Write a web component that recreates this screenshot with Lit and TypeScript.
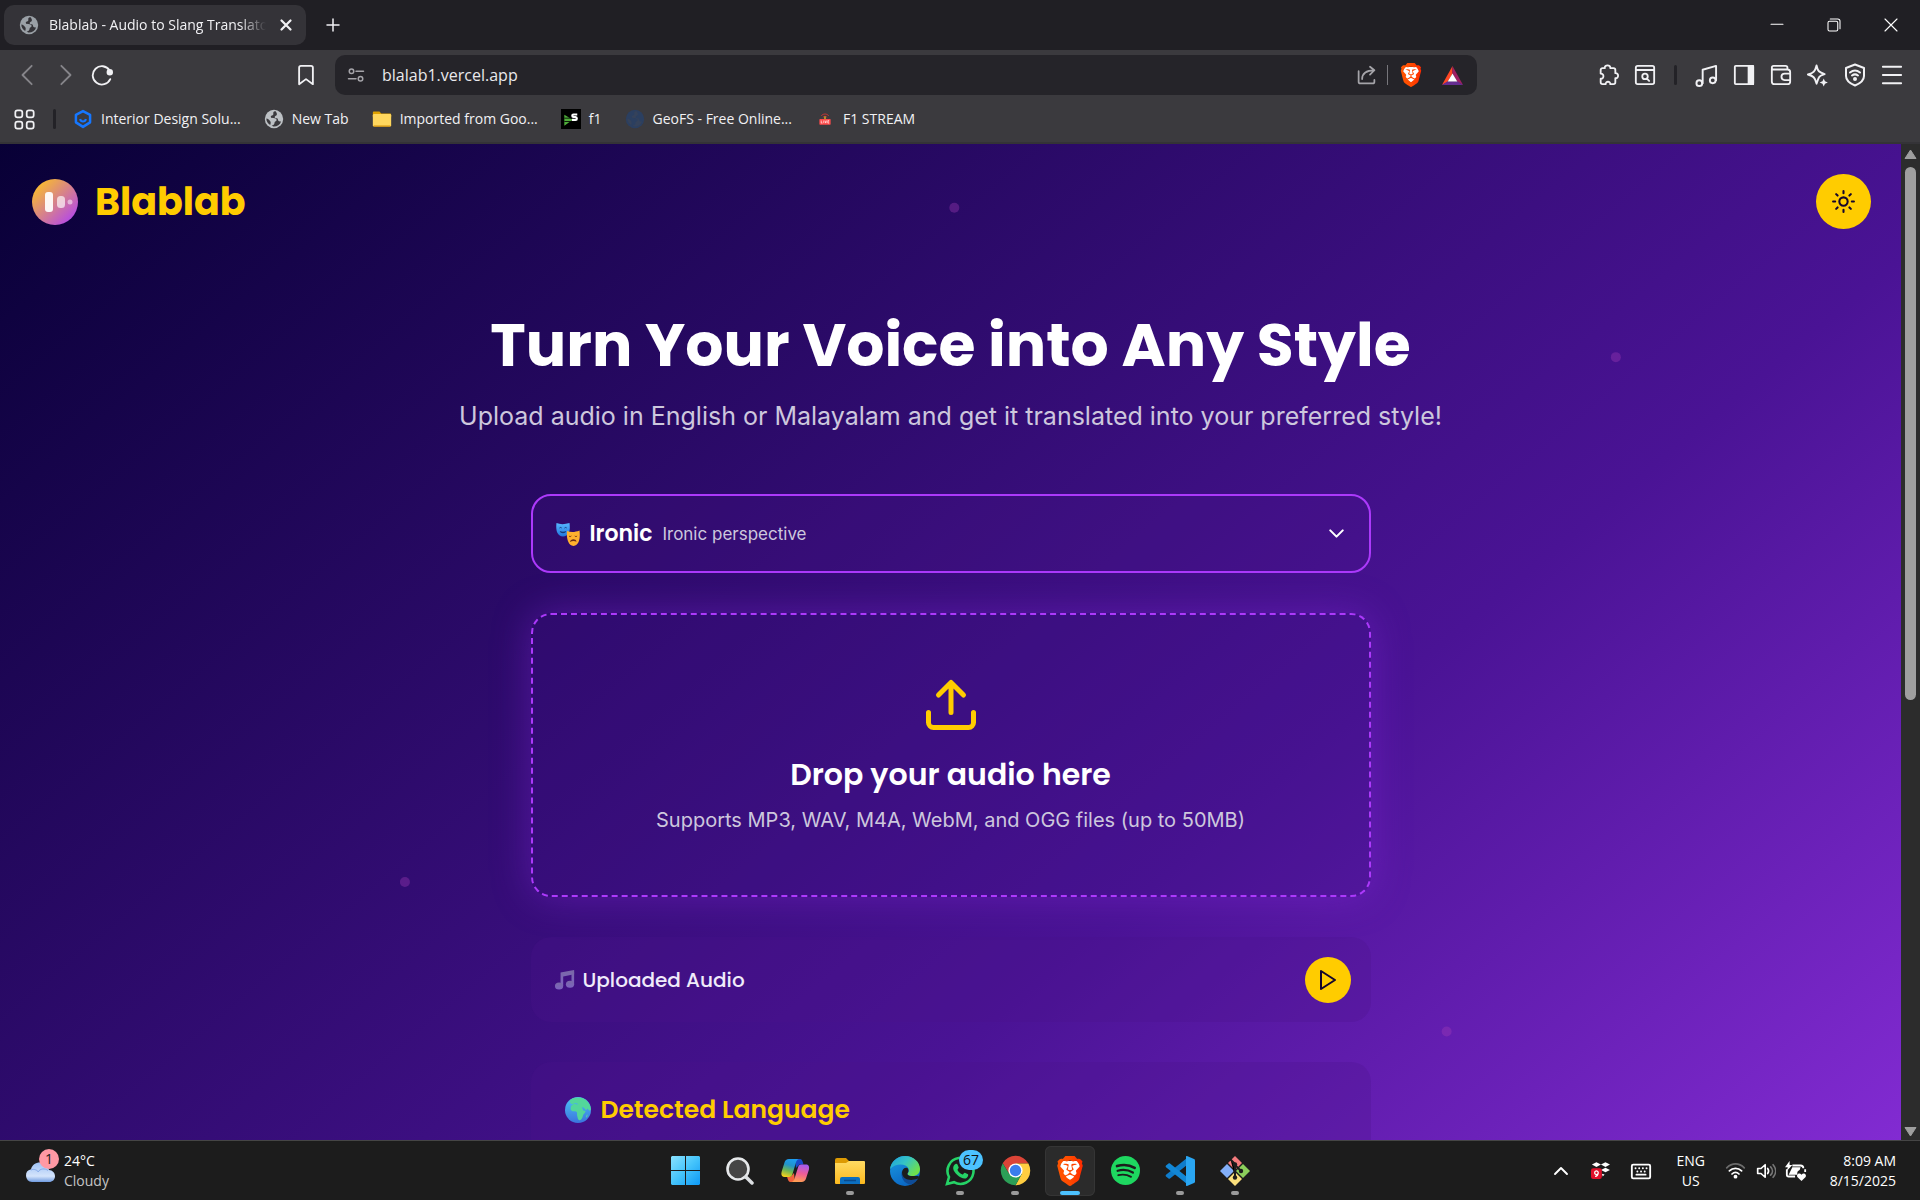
import { LitElement, html, svg, css, type TemplateResult } from "lit";
import { customElement } from "lit/decorators.js";

/* ---------- shared icon helpers ---------- */

const line = (body: TemplateResult, size = 22, width = 2) => html`
  <svg width=${size} height=${size} viewBox="0 0 24 24" fill="none" stroke="currentColor"
    stroke-width=${width} stroke-linecap="round" stroke-linejoin="round" aria-hidden="true">${body}</svg>`;

const art = (body: TemplateResult, size = 30, box = "0 0 24 24") => html`
  <svg width=${size} height=${size} viewBox=${box} aria-hidden="true">${body}</svg>`;

const shieldLion =
  "M15.68 0l2.096 2.38s1.84-.512 2.709.358c.868.87 1.584 1.638 1.584 1.638l-.562 1.381.715 2.047s-2.104 7.98-2.35 8.955c-.486 1.919-.818 2.66-2.198 3.633-1.38.972-3.884 2.66-4.293 2.916-.409.256-.92.692-1.38.692-.46 0-.97-.436-1.38-.692a185.796 185.796 0 01-4.293-2.916c-1.38-.973-1.712-1.714-2.197-3.633-.247-.975-2.351-8.955-2.351-8.955l.715-2.047-.562-1.381s.716-.768 1.585-1.638c.868-.87 2.708-.358 2.708-.358L8.321 0h7.36zm-3.679 14.936c-.14 0-1.038.317-1.758.69-.72.373-1.242.637-1.409.742-.167.104-.065.301.087.409.152.107 2.194 1.69 2.393 1.866.198.175.489.464.687.464.198 0 .49-.29.688-.464.198-.175 2.24-1.759 2.392-1.866.152-.108.254-.305.087-.41-.167-.104-.689-.368-1.41-.741-.72-.373-1.617-.69-1.757-.69zm0-11.278s-.409.001-1.022.206-1.278.46-1.584.46c-.307 0-2.581-.434-2.581-.434S4.119 7.152 4.119 7.849c0 .697.339.881.68 1.243l2.02 2.149c.192.203.59.511.356 1.066-.235.555-.58 1.26-.196 1.977.384.716 1.042 1.194 1.464 1.115.421-.08 1.412-.598 1.776-.834.364-.237 1.518-1.19 1.518-1.554 0-.365-1.193-1.02-1.413-1.168-.22-.15-1.226-.725-1.247-.95-.02-.227-.012-.293.284-.851.297-.559.831-1.304.742-1.8-.089-.495-.95-.753-1.565-.986-.615-.232-1.799-.671-1.947-.74-.148-.068-.11-.133.339-.175.448-.043 1.719-.212 2.292-.052.573.16 1.552.403 1.632.532.079.13.149.134.067.579-.081.445-.5 2.581-.541 2.96-.04.38-.12.63.288.724.409.094 1.097.256 1.333.256s.924-.162 1.333-.256c.408-.093.329-.344.288-.723-.04-.38-.46-2.516-.541-2.961-.082-.445-.012-.45.067-.579.08-.129 1.059-.372 1.632-.532.573-.16 1.845.009 2.292.052.449.042.487.107.339.175-.148.069-1.332.508-1.947.74-.615.233-1.476.49-1.565.986-.09.496.445 1.241.742 1.8.297.558.304.624.284.85-.02.226-1.026.802-1.247.95-.22.15-1.413.804-1.413 1.169 0 .364 1.154 1.317 1.518 1.554.364.236 1.355.755 1.776.834.422.079 1.08-.4 1.464-1.115.384-.716.039-1.422-.196-1.977-.235-.555.164-.863.355-1.066l2.02-2.149c.342-.362.68-.546.68-1.243 0-.697-2.695-3.96-2.695-3.96s-2.274.436-2.58.436c-.307 0-.972-.256-1.585-.461-.613-.205-1.022-.206-1.022-.206z";

const braveLogo = (size: number) => art(svg`
  <defs><linearGradient id="lion" x1="0" x2="1"><stop offset="0" stop-color="#ff5601"/><stop offset=".5" stop-color="#ff4a00"/><stop offset="1" stop-color="#ff2a00"/></linearGradient></defs>
  <path fill="#fff" d="M5 4h14l1 5-4 11-4 2-4-2L4 9z"/><path fill="url(#lion)" d=${shieldLion}/>`, size);

const globe = (fill: string, hole: string, size = 20) => art(svg`
  <circle cx="12" cy="12" r="11" fill=${fill}/>
  <path fill=${hole} d="M13.5 2.5c-2 .6-2.800 1.900-2.300 3.300.3 1-.4 1.700-1.600 1.900-1.300.2-1.800 1.200-1.200 2.300.5.9 1.800.7 3 .8 2 .2 3.700.7 3.700 2.400 0 1.500-1.700 1.400-2.200 2.500-.4.900-.1 2-1 2.900-.8.8-1.700 1.200-2.700 1.300l2 1.200c4.200.3 8-2 9.300-6.200-1.300.4-2.700.2-3.300-.8-.7-1.200-.2-2.500-1.500-3-1.100-.5-2.300.100-2.800-1-.4-1.100.9-1.600 1.900-2.200 1.300-.8.7-3.800-1.300-5.400z"/>
  <path fill=${hole} d="M2.800 11.500c2 .3 3.900 1.800 4.900 3.600.7 1.300.2 3-.3 4.200-2.800-1.700-4.700-4.500-4.600-7.800z"/>`, size);

const resets = css`
  * { box-sizing: border-box; }
  svg { display: block; flex: none; }
  button, input, select { font: inherit; color: inherit; background: none; border: 0; padding: 0; margin: 0; }
  button { display: grid; place-items: center; cursor: pointer; }
  a { color: inherit; text-decoration: none; }
`;

/* ---------- browser frame ---------- */

@customElement("browser-bar")
export class BrowserBar extends LitElement {
  static styles = [resets, css`
    :host { display: block; background: #3b3a3e; color: #f1f1f4; font: 14px/20px "Segoe UI", "Open Sans", sans-serif; border-bottom: 2px solid #343337; }
    .tabs { display: flex; align-items: center; height: 50px; padding: 0 1px 0 4px; background: #201f24; }
    .tab { display: flex; align-items: center; gap: 10px; width: 302px; height: 40px; padding: 0 10px 0 15px; border-radius: 10px; background: #343338; font-size: 14px; }
    .tab-name { flex: 1; overflow: hidden; white-space: nowrap; mask-image: linear-gradient(90deg, #000 88%, transparent); }
    .close-tab { width: 20px; height: 20px; }
    .new-tab { width: 54px; height: 40px; }
    .window { display: flex; margin-left: auto; }
    .window button { width: 57px; height: 48px; color: #fff; }
    .tools { display: flex; align-items: center; height: 50px; padding: 0 10px 0 9px; }
    .tools button { width: 37px; height: 40px; }
    .dim { color: #86858a; }
    .gap { flex: 0 0 167px; }
    .address { display: flex; align-items: center; flex: 1; height: 40px; margin: 0 112px 0 11px; padding: 0 6px 0 2px; border-radius: 10px; background: #252429; }
    .address input { flex: 1; min-width: 0; padding-left: 8px; font-size: 16px; line-height: 24px; outline: 0; color: #e9e9ec; }
    .soft { color: #a5a4a9; }
    .rule { width: 1px; height: 20px; margin-left: 2px; background: #77767b; }
    .address .lion { width: 46px; }
    .bar-rule { width: 3px; height: 20px; margin: 0 11px; border-radius: 2px; background: #232227; }
    .marks { display: flex; align-items: center; gap: 23px; height: 42px; padding: 0 14px 4px; white-space: nowrap; }
    .marks a { display: flex; align-items: center; gap: 8px; }
    .marks .bar-rule { margin: 0 -6px 0 -5px; }
  `];

  render() {
    return html`
      <div class="tabs">
        <div class="tab">
          ${globe("#9aa0a6", "#343338")}
          <span class="tab-name">Blablab - Audio to Slang Translator</span>
          <button class="close-tab" aria-label="Close tab">${line(svg`<path d="M6 6l12 12M18 6L6 18"/>`, 18, 3)}</button>
        </div>
        <button class="new-tab" aria-label="New tab">${line(svg`<path d="M12 4v16M4 12h16"/>`, 18, 2)}</button>
        <div class="window">
          <button aria-label="Minimize">${line(svg`<path d="M4 11h16"/>`, 18, 1.4)}</button>
          <button aria-label="Restore">${line(svg`<rect x="4" y="7" width="13" height="13" rx="2"/><path d="M7 4h10a3 3 0 0 1 3 3v10"/>`, 18, 1.4)}</button>
          <button aria-label="Close">${line(svg`<path d="M4 4l16 16M20 4L4 20"/>`, 18, 1.5)}</button>
        </div>
      </div>
      <div class="tools">
        <button class="dim" aria-label="Back">${line(svg`<path d="M16 2L6 12l10 10"/>`, 22, 2)}</button>
        <button class="dim" aria-label="Forward">${line(svg`<path d="M8 2l10 10L8 22"/>`, 22, 2)}</button>
        <button aria-label="Reload">${line(svg`<path d="M20.300 7A10 10 0 1 0 21 16.500"/><circle cx="20.500" cy="9" r="2.500" fill="currentColor"/>`, 22, 2)}</button>
        <div class="gap"></div>
        <button aria-label="Bookmark this page">${line(svg`<path d="M4.500 4a2 2 0 0 1 2-2h11a2 2 0 0 1 2 2v18L12 16.500 4.500 22z"/>`, 22, 2)}</button>
        <div class="address">
          <button class="soft" aria-label="Site information">${line(svg`<circle cx="6" cy="7" r="3"/><path d="M12 7h10M2 17h10"/><circle cx="18" cy="17" r="3"/>`, 18, 2)}</button>
          <input aria-label="Address" value="blalab1.vercel.app">
          <button class="soft" aria-label="Share">${line(svg`<path d="M3 7v12a2 2 0 0 0 2 2h14a2 2 0 0 0 2-2v-2M7 16c0-6 4-10 14-10M16 2l5 4-5 5"/>`, 21, 2)}</button>
          <span class="rule"></span>
          <button class="lion" aria-label="Brave Shields">${braveLogo(24)}</button>
          <button aria-label="Rewards">${art(svg`<path fill="#ff4724" d="M12 2L1 22l6-3.500 5-8.500z"/><path fill="#9e1f63" d="M12 2l11 20-6-3.500-5-8.500z"/><path fill="#662d91" d="M1 22h22l-6-4H7z"/><path fill="#fff" d="M12 10l5 8.300H7z"/>`, 23)}</button>
        </div>
        <button aria-label="Extensions">${line(svg`<path d="M4 6.500a2 2 0 0 1 2-2h2.500c-.5-4 6.500-4 6 0H18a2 2 0 0 1 2 2V10c4-.5 4 6 0 5.500V20a2 2 0 0 1-2 2h-3.500c.5-3.500-5.500-3.500-5 0H6a2 2 0 0 1-2-2v-4c4 .5 4-6 0-5.500z"/>`, 22, 2)}</button>
        <button aria-label="Search tabs">${line(svg`<rect x="2" y="2" width="20" height="20" rx="2"/><path d="M2 6.500h20M14 16l2.500 2.500"/><circle cx="12" cy="13.500" r="3"/>`, 22, 2)}</button>
        <span class="bar-rule"></span>
        <button aria-label="Playlist">${line(svg`<path d="M8 20V6l14-4v15"/><circle cx="4.500" cy="20" r="3"/><circle cx="18.500" cy="17" r="3"/>`, 23, 2)}</button>
        <button aria-label="Sidebar">${line(svg`<rect x="2" y="2" width="20" height="20" rx="1"/><path fill="currentColor" d="M17 2h5v20h-5z"/>`, 22, 2)}</button>
        <button aria-label="Wallet">${line(svg`<path d="M2 5v14a3 3 0 0 0 3 3h14a3 3 0 0 0 3-3V9a3 3 0 0 0-3-3H4a2 2 0 0 1 0-4h13a2 2 0 0 1 2 2v2M22 10.500h-6a3.500 3.500 0 0 0 0 7h6"/>`, 22, 2)}</button>
        <button aria-label="Assistant">${line(svg`<path d="M11 1.500c1.300 6 2.500 7.200 8.500 9-3.500 1-5 1.500-6 3.500-1 1.800-1.500 4-2.500 6.500-1.500-6.500-3.500-8-9-9.500 6-1.500 7.500-3.500 9-9.500z"/><path fill="currentColor" d="M18.500 15l1.300 3 3 1.200-3 1.300-1.300 3-1.300-3-3-1.300 3-1.200z" stroke-width="0"/>`, 23, 2)}</button>
        <button aria-label="VPN">${line(svg`<path d="M12 1.500l9 3.500v8c0 4.500-4 7.500-9 9.500-5-2-9-5-9-9.500V5z"/><path d="M7 9.500c3-2.500 7-2.500 10 0M9 12.500c2-1.500 4-1.500 6 0"/><circle cx="12" cy="16" r="1" fill="currentColor"/>`, 24, 2)}</button>
        <button aria-label="Menu">${line(svg`<path d="M2 3h20M2 12h20M2 21h20"/>`, 22, 2)}</button>
      </div>
      <nav class="marks" aria-label="Bookmarks">
        <button aria-label="All bookmarks">${line(svg`<rect x="1.500" y="1.500" width="8" height="8" rx="2.500"/><rect x="14.500" y="1.500" width="8" height="8" rx="2.500"/><rect x="1.500" y="14.500" width="8" height="8" rx="2.500"/><rect x="14.500" y="14.500" width="8" height="8" rx="2.500"/>`, 21, 2)}</button>
        <span class="bar-rule"></span>
        <a href="#interior">${art(svg`<path d="M12 2.500l8.500 4.500v9L12 21.500 3.500 16V7z" fill="none" stroke="#1677ff" stroke-width="3" stroke-linejoin="round"/><path d="M8.500 12c1 4 6 4 7 0" fill="none" stroke="#1677ff" stroke-width="2.500"/>`, 20)}Interior Design Solu...</a>
        <a href="#new">${globe("#bcc0c4", "#3b3a3e")}New Tab</a>
        <a href="#imported">${art(svg`<path fill="#e0a200" d="M1 4.500c0-1 .5-1.500 1.500-1.500H9l2 2.500h10.500c1 0 1.500.5 1.500 1.500v3H1z"/><rect x="1" y="6" width="22" height="15" rx="1.500" fill="#ffd75e"/><path d="M2 20.500h20" stroke="#d9980d" stroke-width="1.500"/>`, 20)}Imported from Goo...</a>
        <a href="#f1">${art(svg`<path fill="#000" d="M0 0h24v24H0z"/><path fill="#4fae3a" d="M4 7l10 6-10 7z"/><path d="M4 11h10M4 15h8" stroke="#000"/><path d="M19.500 6.500h-4.500c-2 0-2 3 0 3h2.500c2 0 2 3.500 0 3.500H13" fill="none" stroke="#fff" stroke-width="2.500"/>`, 20)}f1</a>
        <a href="#geofs">${globe("#2b3f60", "#35425a")}GeoFS - Free Online...</a>
        <a href="#stream">${art(svg`<path d="M6 8c3-4 9-4 12 0M8.500 10.500c2-2.500 5-2.500 7 0" fill="none" stroke="#c93434" stroke-width="1.500"/><path d="M12 9v5" stroke="#f3c623" stroke-width="2"/><rect x="3" y="13" width="18" height="9" rx="1" fill="#ff4b4b"/><path d="M6 15.500v4h2M10 15.500v4M12 15.500l1.200 4 1.200-4M18.500 15.500h-2v4h2M16.500 17.500h1.500" fill="none" stroke="#fff"/>`, 20, "-4 -3 32 32")}F1 STREAM</a>
      </nav>`;
  }
}

/* ---------- web page ---------- */

@customElement("blab-page")
export class BlabPage extends LitElement {
  static styles = [resets, css`
    :host { display: flex; overflow: hidden; --yellow: #ffcc00; --violet: #ac39fb; color: #fff; font: 17px/28px Inter, sans-serif; }
    .page { position: relative; flex: 1; min-width: 0; overflow: hidden; background: linear-gradient(140deg, #080036 0%, #4a1395 66%, #822bd2 100%); }
    .top { display: flex; align-items: center; justify-content: space-between; padding: 30px 30px 30px 32px; }
    .brand { display: flex; align-items: center; gap: 17px; font: 700 38px/48px Poppins, Inter, sans-serif; color: var(--yellow); }
    .theme { width: 55px; height: 55px; border-radius: 50%; background: var(--yellow); color: #14052e; }
    main { display: flex; flex-direction: column; align-items: center; padding: 50px 20px 0; }
    h1, h2, h3, p { margin: 0; }
    h1 { font: 700 60px/72px Poppins, Inter, sans-serif; }
    .lead { margin: 15px 0 58px; font-size: 25px; line-height: 40px; color: #cdc7dd; }
    .stack { display: flex; flex-direction: column; gap: 40px; width: 100%; max-width: 840px; }
    .style { display: flex; align-items: center; gap: 10px; height: 79px; padding: 0 20px 0 23px; border: 2px solid var(--violet); border-radius: 20px; background: #4a148c33; }
    .style select { appearance: none; field-sizing: content; font: 600 22px/30px Poppins, Inter, sans-serif; outline: 0; }
    .style option { color: #14052e; }
    .hint { flex: 1; color: #cdc7dd; }
    .drop { position: relative; display: flex; flex-direction: column; align-items: center; padding: 60px 20px; border: 2px dashed var(--violet); border-radius: 20px; background: #3a0f8433; color: var(--yellow); box-shadow: 0 0 38px #8a2be266; cursor: pointer; }
    .drop input { position: absolute; inset: 0; opacity: 0; }
    .drop-title { margin: 20px 0 10px; font: 600 30px/40px Poppins, Inter, sans-serif; color: #fff; }
    .drop-note { font-size: 20px; line-height: 30px; color: #cdc7dd; }
    .card { border-radius: 20px; background: #4a148c44; }
    .audio { display: flex; align-items: center; gap: 8px; height: 85px; padding: 0 20px 0 23px; }
    .audio h3 { flex: 1; font: 500 20px/30px Poppins, Inter, sans-serif; color: #f0ebfa; }
    .play { width: 46px; height: 46px; border-radius: 50%; background: var(--yellow); color: #14052e; }
    .language { display: flex; gap: 10px; padding: 30px 34px 90px; }
    .language svg { margin-top: 5px; }
    .language h2 { font: 600 25px/36px Poppins, Inter, sans-serif; color: var(--yellow); }
    .dots { position: absolute; inset: 0; width: 100%; height: 100%; }
    .scroll { display: flex; flex-direction: column; align-items: center; width: 19px; padding: 5px 0 3px; background: #2c2c2c; }
    .track { flex: 1; width: 11px; padding: 7px 0; }
    .thumb { height: 56%; border-radius: 6px; background: #9f9f9f; }
  `];

  private dots = [["50.2%", "6.4%"], ["85%", "21.4%"], ["21.3%", "74.1%"], ["76.1%", "89.1%"]];

  render() {
    return html`
      <div class="page">
        <svg class="dots" aria-hidden="true">${this.dots.map(([x, y]) => svg`<circle cx=${x} cy=${y} r="5" fill="#a43cb8" fill-opacity=".36"/>`)}</svg>
        <header class="top">
          <div class="brand">
            ${art(svg`<defs><linearGradient id="disc" x1="0" y1="0" x2="1" y2="1"><stop offset=".1" stop-color="#fabd2b"/><stop offset=".9" stop-color="#b347ea"/></linearGradient></defs>
              <circle cx="23" cy="23" r="23" fill="url(#disc)"/><rect x="13" y="13" width="8" height="20" rx="3" fill="#fff" fill-opacity=".92"/><rect x="25" y="17" width="8" height="12" rx="3.500" fill="#fff" fill-opacity=".66"/><circle cx="38" cy="23" r="2.500" fill="#fff" fill-opacity=".5"/>`, 46, "0 0 46 46")}
            <span>Blablab</span>
          </div>
          <button class="theme" aria-label="Switch theme">${line(svg`<circle cx="12" cy="12" r="4"/><path d="M12 2v2M12 20v2M4.930 4.930l1.410 1.410M17.660 17.660l1.410 1.410M2 12h2M20 12h2M6.340 17.660l-1.410 1.410M19.070 4.930l-1.410 1.410"/>`, 25, 2)}</button>
        </header>
        <main>
          <h1>Turn Your Voice into Any Style</h1>
          <p class="lead">Upload audio in English or Malayalam and get it translated into your preferred style!</p>
          <div class="stack">
            <div class="style">
              ${art(svg`<defs><linearGradient id="blue" x2="0" y2="1"><stop stop-color="#58b8ff"/><stop offset="1" stop-color="#2176df"/></linearGradient></defs>
                <path fill="url(#blue)" d="M.5 1c3.500 1.500 8 1.500 13 0 .8 6 .5 13-6.500 13.500C.5 14-.3 7 .5 1z"/>
                <path d="M3.500 6c.7-.7 1.500-.7 2.200 0M8.500 6c.7-.7 1.500-.7 2.200 0" fill="none" stroke="#173a7a"/><path fill="#173a7a" d="M3.800 9c2 1 4.400 1 6.400 0-.4 3-6 3-6.400 0z"/>
                <path fill="#ffb02e" d="M11 9c4 1.500 8 1.300 12.500-.5.8 6 .3 15-6 15.500C11.500 23.500 10.300 15 11 9z"/>
                <path d="M13 14c.7.700 1.600.7 2.300 0M18.800 14c.7.700 1.600.7 2.300 0" fill="none" stroke="#6b2c14"/><path fill="#6b2c14" d="M14 20c.4-3.500 6-3.500 6.500-.3-2-1-4.500-1-6.500.3z"/>`, 24)}
              <select aria-label="Translation style"><option>Ironic</option></select>
              <span class="hint">Ironic perspective</span>
              ${line(svg`<path d="M6 9l6 6 6-6"/>`, 25, 2)}
            </div>
            <label class="drop">
              ${line(svg`<path d="M21 15v4a2 2 0 0 1-2 2H5a2 2 0 0 1-2-2v-4M17 8l-5-5-5 5M12 3v12"/>`, 60, 2)}
              <span class="drop-title">Drop your audio here</span>
              <span class="drop-note">Supports MP3, WAV, M4A, WebM, and OGG files (up to 50MB)</span>
              <input type="file" accept="audio/*">
            </label>
            <section class="card audio">
              ${art(svg`<defs><linearGradient id="note" x2="0" y2="1"><stop stop-color="#7a68a8"/><stop offset="1" stop-color="#7d63c0"/></linearGradient></defs>
                <g fill="url(#note)"><path d="M7.500 4L23 1v5L10.500 8.500V19h-3z"/><path d="M20 3h3v14.500h-3z"/><ellipse cx="5.800" cy="19.500" rx="4.700" ry="4"/><ellipse cx="18.300" cy="17.500" rx="4.700" ry="4"/></g>`, 21)}
              <h3>Uploaded Audio</h3>
              <button class="play" aria-label="Play">${line(svg`<path d="M5 3l14 9-14 9z"/>`, 24, 2)}</button>
            </section>
            <section class="card language">
              ${art(svg`<defs><linearGradient id="sea" x2="0" y2="1"><stop stop-color="#4cc3f5"/><stop offset="1" stop-color="#3b74dd"/></linearGradient></defs>
                <circle cx="12" cy="12" r="12" fill="url(#sea)"/>
                <path fill="#53d69b" d="M5 2.500C8 .3 13-.5 17.500 1.500 21 3.300 23.800 7.500 24 11.500l-1.500 1.200-1.700-2.200-1.300 1.800-2.300-2.700-1.700-.2 1.600 3.300h2c-.2 2-2.300 3-2.600 4.800-.2 1.800-1.800 4-3.300 4-1.700-.5-1.500-3-2-4.500-.4-1.300.5-2.500-.7-3.500-1.500-.5-4 .3-5-1.500-.9-1.900.300-4.500 2-5.200 1.700-.6 3-.2 4.200.3.500-1.200-.9-1.500-2.200-1.400C8 5.800 7 6.800 5.700 6.200 4.500 5.400 4 3.800 5 2.500z"/>
                <path fill="#53d69b" d="M20.300 16l.6.800-.9 2.400-.6-.9z"/>`, 26)}
              <h2>Detected Language</h2>
            </section>
          </div>
        </main>
      </div>
      <div class="scroll" aria-hidden="true">
        <svg width="13" height="11" viewBox="0 0 13 11"><path fill="#9f9f9f" d="M6.500 1L12 9.500H1z" stroke="#9f9f9f" stroke-linejoin="round"/></svg>
        <div class="track"><div class="thumb"></div></div>
        <svg width="13" height="11" viewBox="0 0 13 11"><path fill="#9f9f9f" d="M6.500 10L12 1.500H1z" stroke="#9f9f9f" stroke-linejoin="round"/></svg>
      </div>`;
  }
}

/* ---------- desktop taskbar ---------- */

interface TaskItem { name: string; icon: TemplateResult; state?: "open" | "active"; badge?: string; }

@customElement("task-bar")
export class TaskBar extends LitElement {
  static styles = [resets, css`
    :host { display: grid; grid-template-columns: 1fr auto 1fr; align-items: center; height: 60px; box-sizing: border-box; border-top: 1px solid #454545; background: #1c1c1c; color: #fff; font: 14px/20px "Segoe UI", "Open Sans", sans-serif; }
    .weather { position: relative; display: flex; justify-self: start; gap: 9px; padding: 0 8px 0 25px; text-align: left; }
    .muted { color: #c4c4c4; }
    .count { position: absolute; left: 39px; top: -2px; width: 20px; height: 20px; border-radius: 50%; background: #ff99a4; color: #1c1c1c; text-align: center; }
    .apps { display: flex; gap: 5px; }
    .app { position: relative; width: 50px; height: 50px; border-radius: 6px; }
    .active { background: #2b2b2b; box-shadow: inset 0 0 0 1px #353535; }
    .app::after { content: ""; position: absolute; bottom: 1px; left: 21px; width: 8px; height: 4px; border-radius: 2px; }
    .open::after { background: #9a9a9a; }
    .app.active::after { left: 15px; width: 20px; background: #4cc2ff; }
    .badge { position: absolute; right: 2px; top: 4px; padding: 0 4px; border-radius: 10px; background: #4cc2ff; color: #111; }
    .tray { display: flex; align-items: center; justify-self: end; padding-right: 24px; }
    .tray button { width: 40px; height: 40px; }
    .tray .lang { width: 60px; }
    .tray .quick button { width: 30px; }
    .quick { display: flex; }
    .clock { display: grid; margin-left: 19px; text-align: right; }
  `];

  private items: TaskItem[] = [
    { name: "Start", icon: art(svg`<defs><linearGradient id="win" gradientUnits="userSpaceOnUse" x1="0" y1="0" x2="29" y2="29"><stop stop-color="#8ae2ff"/><stop offset=".5" stop-color="#45c4fb"/><stop offset="1" stop-color="#0d98f5"/></linearGradient></defs><path fill="url(#win)" d="M1 0h13v14H0V1zM15 0h13l1 1v13H15zM0 15h14v14H1l-1-1zM15 15h14v13l-1 1H15z"/>`, 29, "0 0 29 29") },
    { name: "Search", icon: art(svg`<circle cx="12" cy="12" r="10.500" fill="#454545" stroke="#e6e8ea" stroke-width="2.600"/><path d="M20 20l6 6" stroke="#dcdfe2" stroke-width="3.500" stroke-linecap="round"/>`, 28, "0 0 28 28") },
    { name: "Copilot", icon: art(svg`<defs>
      <linearGradient id="cpa" x1=".6" y1="0" x2=".3" y2="1"><stop stop-color="#1d9df0"/><stop offset=".35" stop-color="#2293c9"/><stop offset=".65" stop-color="#6bb455"/><stop offset="1" stop-color="#f4d21c"/></linearGradient>
      <linearGradient id="cpb" x1=".6" y1="0" x2=".4" y2="1"><stop stop-color="#a55bf0"/><stop offset=".5" stop-color="#ee5c97"/><stop offset="1" stop-color="#ff9f52"/></linearGradient></defs>
      <path fill="#1749c8" d="M14 3h5c1.700 0 2.300 1.500 2.800 3l.7 2.500h-4L15 12z"/><path fill="#f2623c" d="M14 26H9.500c-1.700 0-2.300-1.500-2.800-3L6 20.500h4L13 17z"/>
      <path fill="url(#cpa)" d="M8 3h10c-2 .6-2.600 2-3.200 4l-3.300 11c-.6 1.900-1.300 3-3.300 3H3.500C.5 21-.1 18.500.7 15.500L3.500 6.500C4.200 4.200 5.500 3 8 3z"/>
      <path fill="url(#cpb)" d="M20.500 26h-10c2-.6 2.600-2 3.200-4L17 11.500c.6-1.900 1.300-3 3.300-3H25c3 0 3.600 2.500 2.800 5.500L25 22.500c-.7 2.300-2 3.500-4.500 3.500z"/>`, 29, "0 0 29 29") },
    { name: "File Explorer", state: "open", icon: art(svg`<defs><linearGradient id="fold" x2="0" y2="1"><stop stop-color="#ffdb63"/><stop offset="1" stop-color="#fcb91e"/></linearGradient></defs><path fill="#dd9a03" d="M0 4a2 2 0 0 1 2-2h9l3 3h12v8H0z"/><path fill="url(#fold)" d="M0 7h11l3-2h15a1 1 0 0 1 1 1v21a1 1 0 0 1-1 1H1a1 1 0 0 1-1-1z"/><path fill="#0c6fc0" d="M5 28v-5a2 2 0 0 1 2-2h16a2 2 0 0 1 2 2v5z"/><path d="M9 24.500h12" stroke="#0a4a8c" stroke-width="1.500"/>`, 30, "0 0 30 30") },
    { name: "Edge", icon: art(svg`<defs><linearGradient id="ea" x1="0" y1="0" x2="1" y2=".6"><stop stop-color="#1c9fdf"/><stop offset=".5" stop-color="#35c3c6"/><stop offset="1" stop-color="#6fe04a"/></linearGradient><linearGradient id="eb" x1="0" y1="0" x2=".5" y2="1"><stop stop-color="#1b9be2"/><stop offset="1" stop-color="#0a67c4"/></linearGradient></defs>
      <circle cx="15" cy="15" r="15" fill="url(#eb)"/><path fill="#0f4c97" d="M12 15c-2 6 2 13 9 13.700 3-1.400 5-3.500 6.700-6.200-5 2-9.700 1-11.700-3.500z"/>
      <path fill="url(#ea)" d="M0 13C1 5.500 7.500 0 15 0c8.500 0 15 6 15 13 0 4.500-3.500 7-7.500 7-3.500 0-5.500-1.300-5-2.500 1.500-1.500 1.700-3 1-5C16.500 7.500 6 6.500 0 13z"/>
      <path fill="#1c1c1c" d="M12 16.500c.2-3 2.500-5.200 5.500-4.500 1.200 1.700 1.500 3.700 0 5.500-.5 1.200 1 2.300 3 2.500h7c2 0 1.700 1.200.9 2.500-6 2.500-16 2.500-16.400-6z"/>`, 30, "0 0 30 30") },
    { name: "WhatsApp", state: "open", badge: "67", icon: art(svg`<path d="M2 28l2-7A13 13 0 1 1 9 26.200z" fill="none" stroke="#25d366" stroke-width="2.600"/><path fill="#25d366" d="M10.500 8c1-.5 1.800 0 2.200 1l1 2.400c.2.700-1.400 2-1.200 2.500 1 2 2.800 3.700 5 4.500.7.300 1.600-1.800 2.400-1.600l2.600 1.300c1.500.8.3 3-.9 3.800-4 2.500-13-4.500-13.400-9.400-.1-1.900.8-3.700 2.300-4.500z"/>`, 30, "0 0 30 30") },
    { name: "Chrome", state: "open", icon: art(svg`<path fill="#db4437" d="M2.100 6.300A11.500 11.500 0 0 1 22 6.500H12L7.200 14.750z"/><path fill="#ffcd40" d="M22 6.500A11.500 11.500 0 0 1 12 23.500l4.760-8.750L12 6.500z"/><path fill="#2c9f57" d="M12 23.500A11.500 11.500 0 0 1 2.100 6.300l5.100 8.450h9.560z"/><circle cx="12" cy="12" r="5.500" fill="#fff"/><circle cx="12" cy="12" r="4.400" fill="#3b7ded"/>`, 31) },
    { name: "Brave", state: "active", icon: braveLogo(30) },
    { name: "Spotify", icon: art(svg`<circle cx="12" cy="12" r="12" fill="#1ed760"/><g fill="none" stroke="#1c1c1c" stroke-linecap="round"><path d="M5 8.300c5-1.400 10.500-.9 14.600 1.500" stroke-width="2.200"/><path d="M5.500 12.200c4.300-1.200 9-.6 12.600 1.500" stroke-width="1.900"/><path d="M6 15.900c3.700-.9 7.500-.4 10.600 1.400" stroke-width="1.500"/></g>`, 29) },
    { name: "Visual Studio Code", state: "open", icon: art(svg`<path fill="#0f7ccb" d="M22 2v7L5 22.500c-.5.400-1 .4-1.500 0L1 20.500c-.5-.5-.5-1.200 0-1.700z"/><path fill="#1287d6" d="M22 28v-7L5 7.500c-.5-.4-1-.4-1.500 0L1 9.500c-.5.500-.5 1.200 0 1.700z"/><path fill="#2aa6f2" d="M22 0l7 3c.6.300 1 .8 1 1.500v21c0 .7-.4 1.200-1 1.500l-7 3c-1 .3-1-.5-1-1V1c0-.5 0-1.300 1-1z"/>`, 30, "0 0 30 30") },
    { name: "Git", state: "open", icon: art(svg`<path fill="#f47b7d" d="M15 0l7 7-7 7-7-7z"/><path fill="#8ccf5b" d="M23 8l7 7-7 7-7-7z"/><path fill="#83aff8" d="M7 8l7 7-7 7-7-7z"/><path fill="#fbe07c" d="M15 16l7 7-7 7-7-7z"/><path d="M10.500 3.500L15 8v13M15 9l6 6" stroke="#1c1c1c" stroke-width="2"/><g fill="#1c1c1c"><circle cx="15" cy="8.500" r="2.200"/><circle cx="21" cy="15" r="2.200"/><circle cx="15" cy="21.500" r="2.200"/></g>`, 30, "0 0 30 30") },
  ];

  render() {
    return html`
      <button class="weather" aria-label="Weather">
        ${art(svg`<defs><linearGradient id="cl" x2="0" y2="1"><stop stop-color="#9fc2f6"/><stop offset=".7" stop-color="#d4e4fb"/><stop offset="1" stop-color="#6f9be0"/></linearGradient></defs><path fill="url(#cl)" d="M7 26a6.500 6.500 0 0 1-1-12.800C7 9 10.500 6.500 15 6.500c5 0 8 3 9 7.500 3.500.3 6 2.800 6 6.200 0 3.300-2.500 5.800-6 5.800z"/><path d="M6 14c3-1.500 6 0 7.500 2M13 16c2-3.500 7-4 10-1.500" fill="none" stroke="#86abea"/>`, 30, "0 0 30 30")}
        <span>24°C<br><span class="muted">Cloudy</span></span>
        <span class="count">1</span>
      </button>
      <nav class="apps" aria-label="Apps">
        ${this.items.map((i) => html`<button class="app ${i.state ?? ""}" aria-label=${i.name}>${i.icon}${i.badge ? html`<span class="badge">${i.badge}</span>` : ""}</button>`)}
      </nav>
      <div class="tray">
        <button aria-label="Hidden icons">${line(svg`<path d="M4 16l8-8 8 8"/>`, 18, 2.5)}</button>
        <button aria-label="Dropbox">${art(svg`<g fill="#fff"><path d="M1 4l5-2.500L11 4 6 6.500zM11 4l5-2.500L21 4l-5 2.500zM11 10l5-2.500 5 2.500-5 2.500zM12 14l3 1-2 2z"/></g><rect x="0" y="8" width="12" height="12" rx="2.500" fill="#e0102a"/><path d="M8 13.500a2 2 0 1 1 0-1c0 3-.8 4.500-3.500 4.500" fill="none" stroke="#fff" stroke-width="1.400"/>`, 19, "0 0 21 21")}</button>
        <button aria-label="Touch keyboard">${line(svg`<rect x="2" y="5" width="20" height="15" rx="1.500"/><path d="M6 9h.1M10 9h.1M14 9h.1M18 9h.1M8 12.500h.1M12 12.500h.1M16 12.500h.1M7 16h10"/>`, 22, 2)}</button>
        <button class="lang" aria-label="Language"><span>ENG<br>US</span></button>
        <div class="quick">
          <button aria-label="Network">${line(svg`<path d="M2 9c6-6 14-6 20 0" opacity=".35"/><path d="M5 12.500c4-4 10-4 14 0M8 16c2.500-2.500 5.500-2.500 8 0"/><circle cx="12" cy="19" r="1.200" fill="currentColor"/>`, 21, 2)}</button>
          <button aria-label="Volume">${line(svg`<path d="M2 9h4l5-4.500v15L6 15H2zM14 9c1.500 2 1.500 4 0 6"/><path d="M17.500 7c3 3 3 7 0 10M20.500 4.500c4 4.500 4 10.500 0 15" opacity=".4"/>`, 20, 2)}</button>
          <button aria-label="Battery">${art(svg`<path d="M8 6h9c2.500 0 3 1 3 3M2 10v6c0 1.500.5 2 2 2h7M22 10v3" fill="none" stroke="#fff" stroke-width="2"/><path fill="#fff" d="M5 1L0 8h3L2 12l6-6.500H5zM8 8h9l-1 3c-2 1-3 2-2.500 5H4z"/><path fill="#fff" d="M18 23l-4.500-4.500c-1.500-2.500 2-5.500 4.500-2.500 2.500-3 6 0 4.500 2.500z"/>`, 22)}</button>
        </div>
        <div class="clock"><span>8:09 AM</span><span>8/15/2025</span></div>
      </div>`;
  }
}

/* ---------- shell ---------- */

@customElement("app-root")
export class AppRoot extends LitElement {
  static styles = css`
    :host { display: flex; flex-direction: column; height: 100vh; overflow: hidden; }
    blab-page { flex: 1; min-height: 0; }
  `;

  render() {
    return html`<browser-bar></browser-bar><blab-page></blab-page><task-bar></task-bar>`;
  }
}
